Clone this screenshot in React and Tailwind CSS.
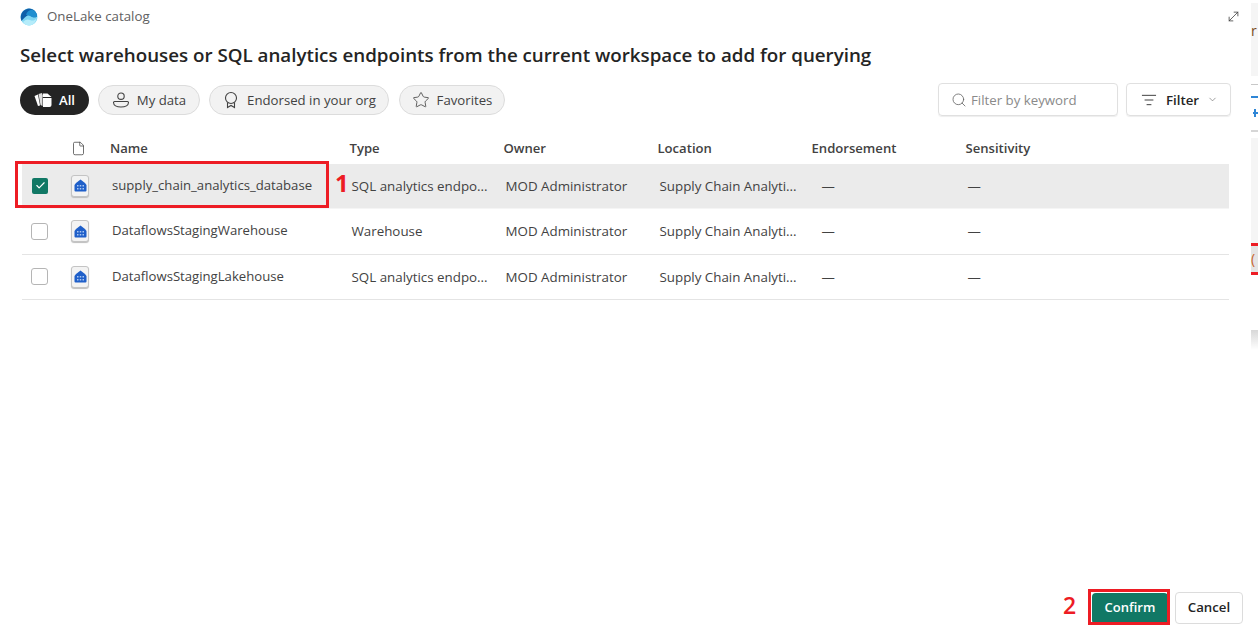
import { Search, ListFilter, ChevronDown, Check, Star, File, MoveDiagonal } from 'lucide-react'

const rows = [
  { name: 'supply_chain_analytics_database', type: 'SQL analytics endpo...', selected: true },
  { name: 'DataflowsStagingWarehouse', type: 'Warehouse' },
  { name: 'DataflowsStagingLakehouse', type: 'SQL analytics endpo...' },
]

function LakeLogo() {
  return (
    <svg width="18" height="18" viewBox="0 0 18 18">
      <circle cx="9" cy="9" r="8.5" fill="#7fd6f2" />
      <path d="M1.500 13C-1 7 3 1 9 .5c5 0 8 4 8 8-3 2-5 0-7-1-3-1-5 2-8.500 5.500z" fill="#0f5fa8" />
      <path d="M6 7c1-4 5-6.500 8-4.500 2 1.500 3 4 3 6-3 2-6 0-8-1-1-.5-2-.5-3-.5z" fill="#1f8fd0" />
      <path d="M3 14c3-3 5-3 7-2s4 1 6.500-1.500C15.500 15 12.500 17.500 9 17.500c-2.500 0-5-1.500-6-3.500z" fill="#b5ecfa" />
    </svg>
  )
}

function WarehouseIcon() {
  return (
    <div className="w-[18px] h-[22px] rounded-[3px] border border-[#c4c4c4] bg-[#f3f3f3] shadow-[0_1px_1px_#bdbdbd] flex items-center justify-center">
      <svg width="13" height="13" viewBox="0 0 13 13">
        <path d="M6.500 .5 11 4l1.500 2v5.500a1 1 0 0 1-1 1h-10a1 1 0 0 1-1-1V6L2 4z" fill="#1f5fc9" />
        <g fill="#a9c6f2">
          <rect x="3" y="6" width="1.500" height="1.500" />
          <rect x="5.750" y="6" width="1.500" height="1.500" />
          <rect x="8.500" y="6" width="1.500" height="1.500" />
          <rect x="3" y="9" width="1.500" height="1.500" />
          <rect x="5.750" y="9" width="1.500" height="1.500" />
          <rect x="8.500" y="9" width="1.500" height="1.500" />
        </g>
      </svg>
    </div>
  )
}

function AllIcon() {
  return (
    <svg width="18" height="16" viewBox="0 0 18 16" fill="none">
      <path d="M.5 4 4 2.500 6 13.500 4 14z" fill="#fff" />
      <path d="M4.500 2 8 1l1 3.500h-.5V14L6.500 13z" fill="#fff" opacity=".85" />
      <path d="M9 1.500h4.500L17.500 5H9z" fill="#fff" />
      <path d="M9 6h8.500v7a2 2 0 0 1-2 2H9z" fill="#fff" />
    </svg>
  )
}

function PersonIcon() {
  return (
    <svg width="18" height="18" viewBox="0 0 18 18" fill="none" stroke="#424242" strokeWidth="1.100">
      <circle cx="9" cy="5.200" r="3.200" />
      <path d="M2.500 10.500h13a1 1 0 0 1 1 1c0 2.500-3 4.500-7.500 4.500s-7.500-2-7.500-4.500a1 1 0 0 1 1-1z" />
    </svg>
  )
}

function RibbonIcon() {
  return (
    <svg width="18" height="18" viewBox="0 0 18 18" fill="none" stroke="#424242" strokeWidth="1.100">
      <circle cx="9" cy="7" r="5.500" />
      <path d="M5.500 11.500V16.500l3.500-2 3.500 2v-5" />
    </svg>
  )
}

function Chip({ icon, children, active, className }) {
  return (
    <div
      className={
        'h-[30px] rounded-full flex items-center justify-center gap-[7px] text-[13.2px] ' +
        (active ? 'bg-[#242424] text-white font-semibold ' : 'bg-[#f2f2f2] border border-[#dcdcdc] text-[#424242] ') +
        className
      }
    >
      {icon}
      <span className="pt-[2px]">{children}</span>
    </div>
  )
}

export default function App() {
  return (
    <div className="relative w-[1258px] h-[635px] overflow-hidden bg-white text-[#424242] font-['Open_Sans','Noto_Sans',sans-serif]">
      {/* app behind the dialog, peeking out on the right */}
      <div className="absolute right-0 top-0 w-[7px] h-full bg-white">
        <div className="absolute top-[3px] left-0 w-full h-[73px] bg-[#f5f5f5] text-[14px] leading-[56px] text-[#7a4a20]">r</div>
        <div className="absolute top-[84px] left-0 w-full h-px bg-[#c8c8c8]" />
        <div className="absolute top-[96px] left-0 w-full h-[2px] bg-[#2f86d6]" />
        <div className="absolute top-[112px] left-[2px] w-[5px] h-[2px] bg-[#2f86d6]" />
        <div className="absolute top-[109px] left-[3px] w-[2px] h-[8px] bg-[#2f86d6]" />
        <div className="absolute top-[130px] left-0 w-full h-[2px] bg-[#d6d6d6]" />
        <div className="absolute top-[138px] left-0 w-full h-[105px] bg-[#f5f5f5]" />
        <div className="absolute top-[243px] left-0 w-full h-[32px] bg-[#e4e4e4] border-y-[3px] border-[#ed1c24] text-[14px] leading-[26px] text-[#c8622a]">(</div>
        <div className="absolute top-[330px] left-0 w-full h-[20px] bg-gradient-to-b from-[#d8d8d8] to-white" />
      </div>

      <div className="w-[1251px] h-full flex flex-col pl-[20px] pr-[8px]">
        {/* title bar */}
        <div className="h-[33px] flex items-center">
          <LakeLogo />
          <span className="ml-[9px] text-[13.3px] text-[#616161]">OneLake catalog</span>
          <MoveDiagonal className="ml-auto mr-[2px] text-[#424242]" size={15} strokeWidth={1.3} />
        </div>

        <h1 className="mt-[8px] h-[28px] leading-[28px] text-[18.75px] font-semibold text-[#242424] whitespace-nowrap">
          Select warehouses or SQL analytics endpoints from the current workspace to add for querying
        </h1>

        {/* filter chips + search */}
        <div className="mt-[14px] h-[33px] flex items-center gap-[9px] pr-[12px]">
          <Chip active className="w-[69px]" icon={<AllIcon />}>All</Chip>
          <Chip className="w-[102px]" icon={<PersonIcon />}>My data</Chip>
          <Chip className="w-[180px]" icon={<RibbonIcon />}>Endorsed in your org</Chip>
          <Chip className="w-[106px] ml-px" icon={<Star size={18} strokeWidth={1.1} />}>Favorites</Chip>
          <div className="ml-auto w-[180px] h-[33px] rounded-[4px] border border-[#e0e0e0] shadow-[0_1px_1px_#eee] flex items-center pl-[12px] gap-[4px] text-[13.25px] text-[#8a8a8a]">
            <Search size={16} strokeWidth={1.2} className="text-[#616161]" />
            <span className="pt-[2px]">Filter by keyword</span>
          </div>
          <div className="-ml-px w-[105px] h-[33px] rounded-[4px] border border-[#e0e0e0] shadow-[0_1px_1px_#eee] flex items-center pl-[14px] text-[13.25px] font-semibold text-[#242424]">
            <ListFilter size={16} strokeWidth={1.3} />
            <span className="ml-[9px] pt-[2px]">Filter</span>
            <ChevronDown size={11} strokeWidth={1.3} className="ml-[8px] text-[#616161]" />
          </div>
        </div>

        {/* table */}
        <div className="mt-[15.5px] ml-[2px] w-[1207px]">
          <div className="h-[32px] pt-[2px] flex items-center text-[13.1px] font-semibold text-[#424242]">
            <div className="w-[49px] shrink-0" />
            <div className="w-[39px] shrink-0"><File size={15} strokeWidth={1.2} /></div>
            <div className="w-[239.5px] shrink-0">Name</div>
            <div className="w-[154px] shrink-0">Type</div>
            <div className="w-[154px] shrink-0">Owner</div>
            <div className="w-[154px] shrink-0">Location</div>
            <div className="w-[154px] shrink-0">Endorsement</div>
            <div>Sensitivity</div>
          </div>
          {rows.map(row => (
            <div
              key={row.name}
              className={'h-[45.500px] flex items-center text-[13.35px] border-b ' + (row.selected ? 'bg-[#ebebeb] border-[#f5f5f5]' : 'border-[#e4e4e4]')}
            >
              <div className="w-[50px] shrink-0 pl-[10px]">
                {row.selected ? (
                  <div className="w-[16px] h-[16px] rounded-[2px] bg-[#117865] flex items-center justify-center">
                    <Check size={11} strokeWidth={2.5} className="text-white" />
                  </div>
                ) : (
                  <div className="w-[17px] h-[17px] -ml-px rounded-[3px] border border-[#b5b5b5] bg-white" />
                )}
              </div>
              <div className="w-[41px] shrink-0 -ml-px"><WarehouseIcon /></div>
              <div className="w-[239.5px] shrink-0 whitespace-nowrap text-[13.15px]">{row.name}</div>
              <div className="w-[154px] shrink-0 whitespace-nowrap">{row.type}</div>
              <div className="w-[154px] shrink-0 whitespace-nowrap">MOD Administrator</div>
              <div className="w-[154px] shrink-0 whitespace-nowrap">Supply Chain Analyti...</div>
              <div className="w-[146px] shrink-0 ml-[8px]">—</div>
              <div>—</div>
            </div>
          ))}
        </div>

        {/* footer */}
        <div className="mt-auto mb-[11px] flex items-center justify-end gap-[7px]">
          <div className="w-[76px] h-[31px] rounded-[4px] bg-[#117865] text-white text-[13px] font-semibold flex items-center justify-center">Confirm</div>
          <div className="w-[68px] h-[32px] rounded-[4px] border border-[#dcdcdc] text-[#242424] text-[13.25px] font-semibold flex items-center justify-center">Cancel</div>
        </div>
      </div>

      {/* red annotations */}
      <div className="absolute left-[15px] top-[161px] w-[314px] h-[47px] border-[3px] border-[#ed1c24]" />
      <div className="absolute left-[335px] top-[169px] text-[24px] leading-[28px] font-bold text-[#ed1c24]">1</div>
      <div className="absolute left-[1088px] top-[589px] w-[82px] h-[36px] border-[3px] border-[#ed1c24]" />
      <div className="absolute left-[1063px] top-[591px] text-[23px] leading-[28px] font-semibold text-[#ed1c24]">2</div>
    </div>
  )
}
